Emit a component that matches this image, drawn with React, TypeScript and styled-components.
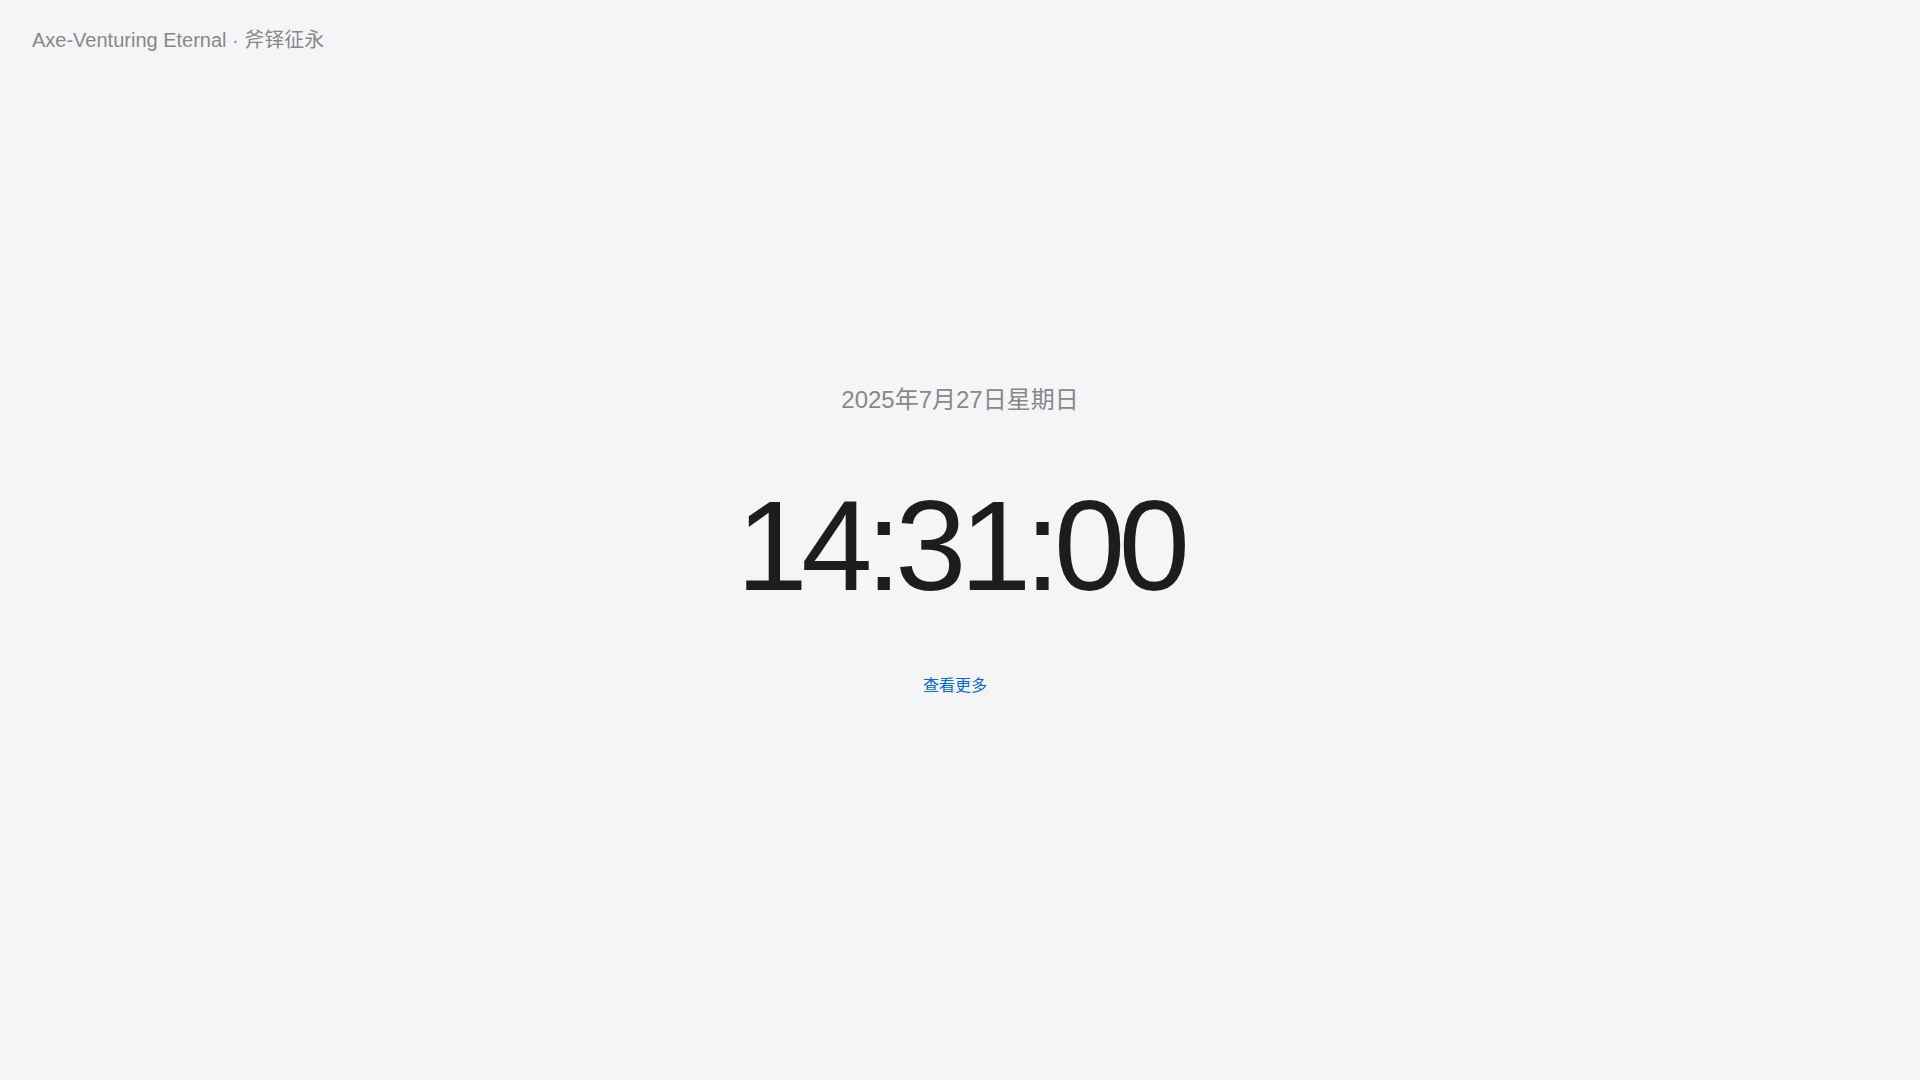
import { createGlobalStyle, styled } from 'styled-components';

const title = 'Axe-Venturing Eternal · 斧铎征永';
const date = '2025年7月27日星期日';
const time = '14:31:00';

export default function App() {
  return (
    <Page>
      <GlobalStyle />
      <Header>
        <Title>{title}</Title>
        <MenuButton type="button" aria-label="菜单">
          <svg width="48" height="48" viewBox="0 0 48 48" fill="none">
            <g stroke="#f7f7f8" strokeWidth="2">
              <path d="M10 4V44M38 4V44" />
              <path d="M14 4H34M14 11H34M14 42H34" />
              <path d="M5 10Q-1 24 5 38M43 10Q49 24 43 38" />
            </g>
            <path d="M14 16H34M14 34H34" stroke="#f7f7f9" strokeWidth="3" />
          </svg>
        </MenuButton>
      </Header>
      <Main>
        <DateText>{date}</DateText>
        <Clock>{time}</Clock>
        <MoreLink href="#more">查看更多</MoreLink>
      </Main>
    </Page>
  );
}

const GlobalStyle = createGlobalStyle`
  * {
    box-sizing: border-box;
  }

  body {
    margin: 0;
    background: #f5f5f7;
    color: #1d1d1f;
    font-family: 'Liberation Sans', 'Noto Sans CJK SC', sans-serif;
  }
`;

const Page = styled.div`
  display: grid;
  grid-template-rows: auto 1fr auto;
  min-height: 100vh;

  &::after {
    content: '';
    height: 80px;
  }
`;

const Header = styled.header`
  display: flex;
  justify-content: space-between;
  align-items: flex-start;
  height: 80px;
  padding: 16px 40px 16px 32px;
`;

const Title = styled.h1`
  margin: 8px 0;
  color: #888888;
  font-size: 20px;
  font-weight: 400;
  line-height: 32px;
`;

const MenuButton = styled.button`
  display: flex;
  padding: 0;
  border: 0;
  background: none;
  cursor: pointer;
`;

const Main = styled.main`
  display: flex;
  flex-direction: column;
  justify-content: center;
  align-items: center;
`;

const DateText = styled.p`
  margin: 0;
  color: #888888;
  font-size: 24px;
  line-height: 36px;
`;

const Clock = styled.time`
  margin: 64px 0;
  font-size: 128px;
  line-height: 128px;
  letter-spacing: -0.05em;
`;

const MoreLink = styled.a`
  padding-right: 10px;
  color: #006bd6;
  font-size: 16px;
  line-height: 24px;
  text-decoration: none;
`;
